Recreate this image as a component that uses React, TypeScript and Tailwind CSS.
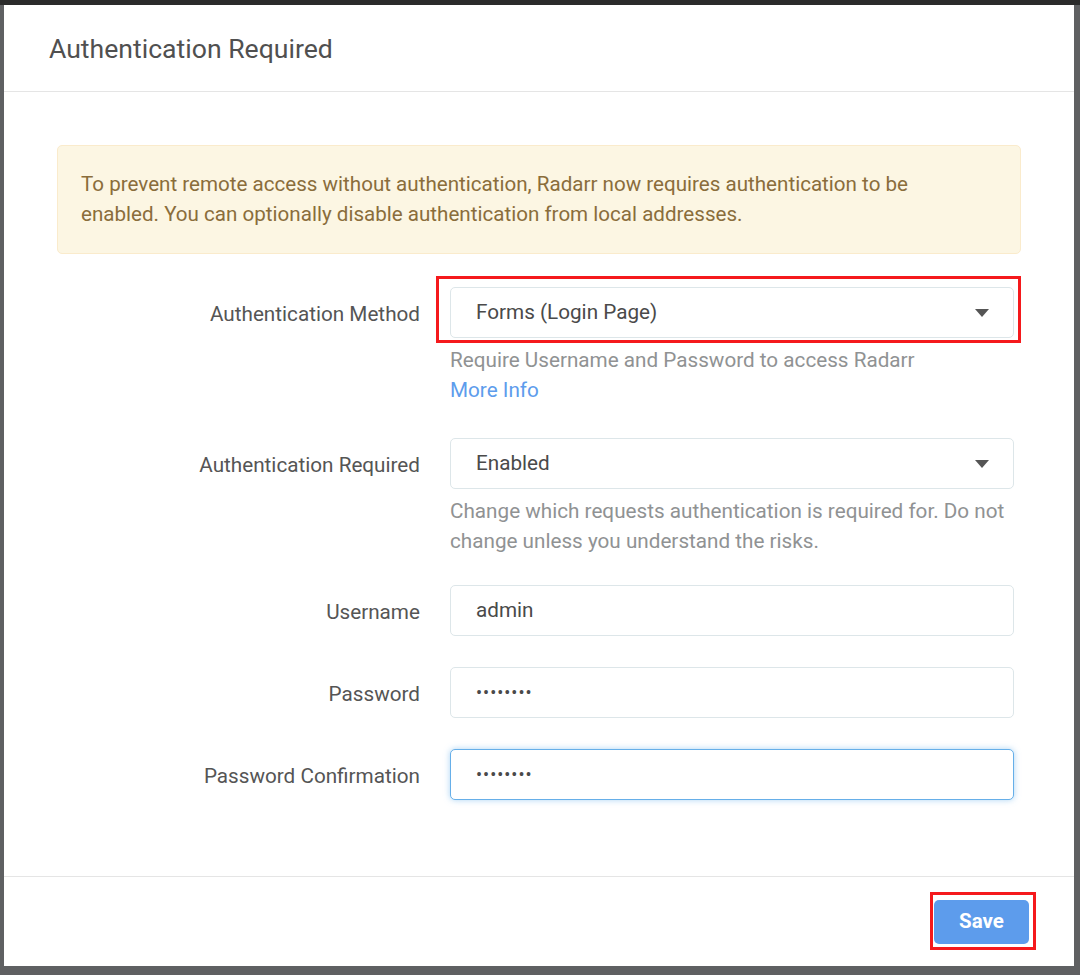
import type { ReactNode } from "react";

const font = { fontFamily: "Roboto, 'Open Sans', sans-serif" };

function Caret() {
  return (
    <svg width="14" height="8" viewBox="0 0 14 8" className="shrink-0">
      <path d="M0 0 L14 0 L7 8 Z" fill="#555555" />
    </svg>
  );
}

function Field({
  children,
  focused = false,
  select = false,
}: {
  children: ReactNode;
  focused?: boolean;
  select?: boolean;
}) {
  return (
    <div
      className={
        "flex h-[51px] w-full items-center justify-between rounded-[5px] border bg-white pl-[25px] pr-[24px] text-[20.7px] text-[#4a4a4a] " +
        (focused
          ? "border-[#66afe9] shadow-[0_0_6px_rgba(102,175,233,0.55)]"
          : "border-[#dde6e9]")
      }
    >
      <span>{children}</span>
      {select && <Caret />}
    </div>
  );
}

// masked password value
function Dots() {
  return <span className="text-[18px] tracking-[1px] text-[#4a4a4a]">••••••••</span>;
}

function Row({
  label,
  children,
  help,
  className = "",
}: {
  label: string;
  children: ReactNode;
  help?: ReactNode;
  className?: string;
}) {
  return (
    <div className={"flex " + className}>
      <div className="w-[363px] shrink-0 pt-[12px] text-right text-[20.7px] text-[#555555]">{label}</div>
      <div className="ml-[30px] w-[564px]">
        {children}
        {help && <div className="mt-[7px] text-[20.7px] leading-[30px] text-[#909293]">{help}</div>}
      </div>
    </div>
  );
}

export default function App() {
  return (
    <div className="h-[975px] w-[1080px] overflow-hidden border-t-[5px] border-[#2b2b2b] bg-[#5f6062]" style={font}>
      <div className="ml-[4px] flex h-[961px] w-[1070px] flex-col bg-white">
        <div className="flex h-[87px] items-center border-b border-[#e5e5e5] pl-[45px] pt-[2px] text-[26.6px] text-[#505050]">
          Authentication Required
        </div>

        <div className="flex-1 px-[53px] pt-[53px]">
          <div className="rounded-[5px] border border-[#faebcc] bg-[#fcf6e3] pl-[23px] pr-[80px] pt-[23px] pb-[24px] text-[20.6px] leading-[30px] text-[#8a6d3b]">
            To prevent remote access without authentication, Radarr now requires authentication to be
            enabled. You can optionally disable authentication from local addresses.
          </div>

          <Row
            className="mt-[33px]"
            label="Authentication Method"
            help={
              <>
                <div>Require Username and Password to access Radarr</div>
                <div className="text-[#5d9cec]">More Info</div>
              </>
            }
          >
            <div className="relative">
              <Field select>Forms (Login Page)</Field>
              <div className="pointer-events-none absolute -top-[11px] -right-[7px] -bottom-[5px] -left-[14px] border-[3px] border-[#f5191c]" />
            </div>
          </Row>

          <Row
            className="mt-[33px]"
            label="Authentication Required"
            help="Change which requests authentication is required for. Do not change unless you understand the risks."
          >
            <Field select>Enabled</Field>
          </Row>

          <Row className="mt-[29px]" label="Username">
            <Field>admin</Field>
          </Row>
          <Row className="mt-[31px]" label="Password">
            <Field>
              <Dots />
            </Field>
          </Row>
          <Row className="mt-[31px]" label="Password Confirmation">
            <Field focused>
              <Dots />
            </Field>
          </Row>
        </div>

        <div className="flex h-[90px] items-center justify-end border-t border-[#e5e5e5] pr-[45px]">
          <div className="relative">
            <button className="h-[44px] w-[95px] rounded-[5px] bg-[#5d9cec] text-[20.5px] font-bold text-white">
              Save
            </button>
            <div className="pointer-events-none absolute -top-[8px] -right-[7px] -bottom-[6px] -left-[4px] border-[3px] border-[#f5191c]" />
          </div>
        </div>
      </div>
    </div>
  );
}
